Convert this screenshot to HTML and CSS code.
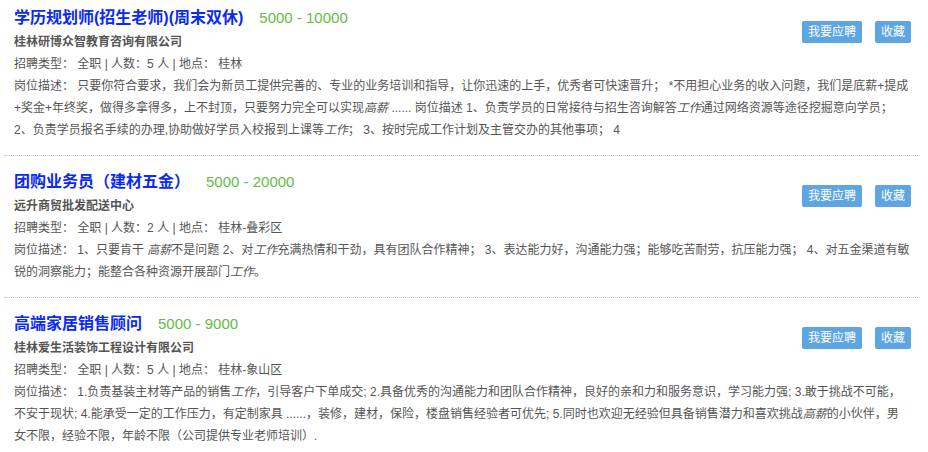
FILE: index.html
```html
<!DOCTYPE html>
<html lang="zh-CN">
<head>
    <meta charset="UTF-8">
    <meta name="viewport" content="width=device-width, initial-scale=1.0">
    <title>招聘信息</title>
    <link rel="stylesheet" href="styles.css">
</head>
<body>

    <div class="job-list">
        <div class="job">
            <div class="job-head">
                <div class="job-info">
                    <div class="job-title"><a href="#">学历规划师(招生老师)(周末双休)</a><span class="salary">5000 - 10000</span></div>
                    <div class="company">桂林研博众智教育咨询有限公司</div>
                    <div class="meta">招聘类型： 全职 | 人数：5 人 | 地点： 桂林</div>
                </div>
                <div class="job-actions">
                    <button class="btn">我要应聘</button>
                    <button class="btn">收藏</button>
                </div>
            </div>
            <p class="desc">岗位描述： 只要你符合要求，我们会为新员工提供完善的、专业的业务培训和指导，让你迅速的上手，优秀者可快速晋升； *不用担心业务的收入问题，我们是底薪+提成+奖金+年终奖，做得多拿得多，上不封顶，只要努力完全可以实现<em>高薪</em> ...... 岗位描述 1、负责学员的日常接待与招生咨询解答<em>工作</em>通过网络资源等途径挖掘意向学员； 2、负责学员报名手续的办理,协助做好学员入校报到上课等<em>工作</em>； 3、按时完成工作计划及主管交办的其他事项； 4</p>
        </div>

        <div class="job">
            <div class="job-head">
                <div class="job-info">
                    <div class="job-title"><a href="#">团购业务员（建材五金）</a><span class="salary">5000 - 20000</span></div>
                    <div class="company">远升商贸批发配送中心</div>
                    <div class="meta">招聘类型： 全职 | 人数：2 人 | 地点： 桂林-叠彩区</div>
                </div>
                <div class="job-actions">
                    <button class="btn">我要应聘</button>
                    <button class="btn">收藏</button>
                </div>
            </div>
            <p class="desc">岗位描述： 1、只要肯干 <em>高薪</em>不是问题 2、对<em>工作</em>充满热情和干劲，具有团队合作精神； 3、表达能力好，沟通能力强；能够吃苦耐劳，抗压能力强； 4、对五金渠道有敏锐的洞察能力；能整合各种资源开展部门<em>工作</em>。</p>
        </div>

        <div class="job">
            <div class="job-head">
                <div class="job-info">
                    <div class="job-title"><a href="#">高端家居销售顾问</a><span class="salary">5000 - 9000</span></div>
                    <div class="company">桂林爱生活装饰工程设计有限公司</div>
                    <div class="meta">招聘类型： 全职 | 人数：5 人 | 地点： 桂林-象山区</div>
                </div>
                <div class="job-actions">
                    <button class="btn">我要应聘</button>
                    <button class="btn">收藏</button>
                </div>
            </div>
            <p class="desc">岗位描述： 1.负责基装主材等产品的销售<em>工作</em>，引导客户下单成交; 2.具备优秀的沟通能力和团队合作精神，良好的亲和力和服务意识，学习能力强; 3.敢于挑战不可能，不安于现状; 4.能承受一定的工作压力，有定制家具 ......，装修，建材，保险，楼盘销售经验者可优先; 5.同时也欢迎无经验但具备销售潜力和喜欢挑战<em>高薪</em>的小伙伴，男女不限，经验不限，年龄不限（公司提供专业老师培训）.</p>
        </div>
    </div>

</body>
</html>
```

FILE: styles.css
```css
body {
    margin: 0;
    font-family: "Liberation Sans", "Noto Sans CJK SC", "Microsoft YaHei", sans-serif;
    font-size: 12px;
    color: #555;
    background: #fff;
}
.job-list {
    margin: 0 8px 0 4px;
}
.job {
    padding: 14px 10px 14px 10px;
    border-bottom: 1px dotted #c8c8c8;
}
.job:first-child {
    padding-top: 6px;
}
.job-head {
    display: flex;
    justify-content: space-between;
    align-items: flex-start;
}
.job-title {
    line-height: 24px;
}
.job-title a {
    font-size: 16px;
    font-weight: bold;
    color: #0a2af5;
    text-decoration: none;
}
.salary {
    margin-left: 16px;
    font-size: 15px;
    color: #66bb48;
}
.company {
    line-height: 22px;
    font-weight: bold;
    color: #555;
}
.meta {
    line-height: 22px;
}
.job-actions {
    display: flex;
    gap: 13px;
    margin-top: 15px;
    margin-right: -1px;
}
.btn {
    height: 22px;
    padding: 0 6px;
    border: none;
    border-radius: 2px;
    background: #5ea6e2;
    color: #fff;
    font-family: inherit;
    font-size: 12px;
    line-height: 22px;
    cursor: pointer;
}
.desc {
    margin: 0;
    line-height: 22px;
}
.desc em {
    font-style: italic;
}
```
